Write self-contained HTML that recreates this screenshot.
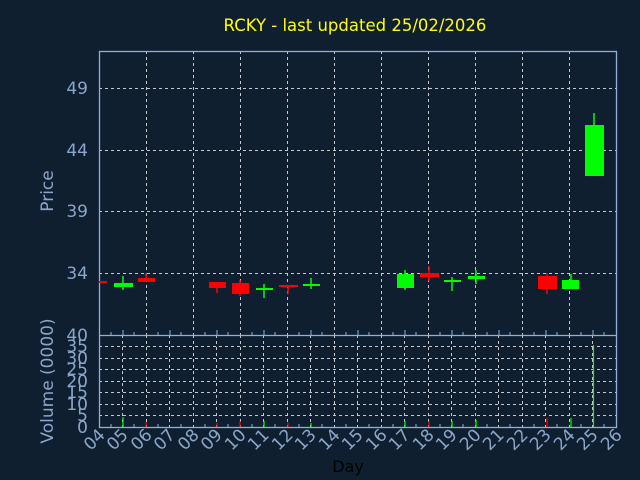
<!DOCTYPE html><html><head><style>body{margin:0;background:#0f1f30;}svg{display:block}</style></head><body>
<svg width="640" height="480" xmlns="http://www.w3.org/2000/svg" font-family="DejaVu Sans, Liberation Sans, sans-serif">
<rect width="640" height="480" fill="#0f1f30"/>
<text x="355" y="31" fill="#ffff00" font-size="16.5" text-anchor="middle">RCKY - last updated 25/02/2026</text>
<g stroke="#c8c8c8" stroke-dasharray="3,3" stroke-width="1">
<line x1="99" x2="617" y1="88.5" y2="88.5"/><line x1="99" x2="617" y1="150.5" y2="150.5"/><line x1="99" x2="617" y1="211.5" y2="211.5"/><line x1="99" x2="617" y1="273.5" y2="273.5"/>
<line x1="146.5" x2="146.5" y1="51" y2="335"/><line x1="193.5" x2="193.5" y1="51" y2="335"/><line x1="240.5" x2="240.5" y1="51" y2="335"/><line x1="287.5" x2="287.5" y1="51" y2="335"/><line x1="334.5" x2="334.5" y1="51" y2="335"/><line x1="381.5" x2="381.5" y1="51" y2="335"/><line x1="428.5" x2="428.5" y1="51" y2="335"/><line x1="475.5" x2="475.5" y1="51" y2="335"/><line x1="522.5" x2="522.5" y1="51" y2="335"/><line x1="569.5" x2="569.5" y1="51" y2="335"/>
<line x1="99" x2="617" y1="346.5" y2="346.5"/><line x1="99" x2="617" y1="358.5" y2="358.5"/><line x1="99" x2="617" y1="369.5" y2="369.5"/><line x1="99" x2="617" y1="381.5" y2="381.5"/><line x1="99" x2="617" y1="392.5" y2="392.5"/><line x1="99" x2="617" y1="404.5" y2="404.5"/><line x1="99" x2="617" y1="415.5" y2="415.5"/>
<line x1="122.5" x2="122.5" y1="335" y2="427"/><line x1="146.5" x2="146.5" y1="335" y2="427"/><line x1="169.5" x2="169.5" y1="335" y2="427"/><line x1="193.5" x2="193.5" y1="335" y2="427"/><line x1="216.5" x2="216.5" y1="335" y2="427"/><line x1="240.5" x2="240.5" y1="335" y2="427"/><line x1="263.5" x2="263.5" y1="335" y2="427"/><line x1="287.5" x2="287.5" y1="335" y2="427"/><line x1="310.5" x2="310.5" y1="335" y2="427"/><line x1="334.5" x2="334.5" y1="335" y2="427"/><line x1="357.5" x2="357.5" y1="335" y2="427"/><line x1="381.5" x2="381.5" y1="335" y2="427"/><line x1="404.5" x2="404.5" y1="335" y2="427"/><line x1="428.5" x2="428.5" y1="335" y2="427"/><line x1="451.5" x2="451.5" y1="335" y2="427"/><line x1="475.5" x2="475.5" y1="335" y2="427"/><line x1="498.5" x2="498.5" y1="335" y2="427"/><line x1="522.5" x2="522.5" y1="335" y2="427"/><line x1="545.5" x2="545.5" y1="335" y2="427"/><line x1="569.5" x2="569.5" y1="335" y2="427"/><line x1="592.5" x2="592.5" y1="335" y2="427"/>
</g>
<g fill="none" stroke="#8fb0d8" stroke-width="1.3">
<rect x="99.5" y="51.5" width="517" height="376"/><line x1="99" x2="617" y1="335.5" y2="335.5"/>
</g>
<g stroke="#8fb0d8" stroke-width="1">
<path d="M111 427v-3M134 427v-3M158 427v-3M181 427v-3M205 427v-3M228 427v-3M252 427v-3M275 427v-3M299 427v-3M322 427v-3M346 427v-3M369 427v-3M393 427v-3M416 427v-3M440 427v-3M463 427v-3M487 427v-3M510 427v-3M534 427v-3M557 427v-3M581 427v-3M604 427v-3"/>
<path d="M111 335v-3M134 335v-3M158 335v-3M181 335v-3M205 335v-3M228 335v-3M252 335v-3M275 335v-3M299 335v-3M322 335v-3M346 335v-3M369 335v-3M393 335v-3M416 335v-3M440 335v-3M463 335v-3M487 335v-3M510 335v-3M534 335v-3M557 335v-3M581 335v-3M604 335v-3"/>
<path d="M123 335v-5M170 335v-5M217 335v-5M264 335v-5M311 335v-5M358 335v-5M405 335v-5M452 335v-5M499 335v-5M546 335v-5M593 335v-5"/>
</g>
<!-- candles -->
<g stroke-width="1.5">
<line x1="99" x2="107" y1="282" y2="282" stroke="#f00" stroke-width="2"/>
<line x1="123" x2="123" y1="276" y2="290" stroke="#0f0"/><rect x="114" y="283" width="19" height="4" fill="#0f0"/>
<line x1="146" x2="146" y1="273" y2="282" stroke="#f00"/><rect x="138" y="278" width="17" height="4" fill="#f00"/>
<line x1="217" x2="217" y1="282" y2="293" stroke="#f00"/><rect x="209" y="282" width="17" height="6" fill="#f00"/>
<line x1="240" x2="240" y1="280" y2="296" stroke="#f00"/><rect x="232" y="283" width="17" height="11" fill="#f00"/>
<line x1="264" x2="264" y1="284" y2="298" stroke="#0f0"/><rect x="256" y="288" width="17" height="2" fill="#0f0"/>
<line x1="288" x2="288" y1="285" y2="294" stroke="#f00"/><rect x="279" y="285" width="19" height="2" fill="#f00"/>
<line x1="311" x2="311" y1="278" y2="289" stroke="#0f0"/><rect x="303" y="284" width="17" height="2" fill="#0f0"/>
<line x1="405" x2="405" y1="270" y2="290" stroke="#0f0"/><rect x="397" y="274" width="17" height="14" fill="#0f0"/>
<line x1="429" x2="429" y1="266" y2="281" stroke="#f00"/><rect x="420" y="273" width="19" height="4" fill="#f00"/>
<line x1="452" x2="452" y1="277" y2="291" stroke="#0f0"/><rect x="444" y="280" width="17" height="2" fill="#0f0"/>
<line x1="476" x2="476" y1="270" y2="284" stroke="#0f0"/><rect x="468" y="276" width="17" height="3" fill="#0f0"/>
<line x1="547" x2="547" y1="273" y2="294" stroke="#f00"/><rect x="538" y="276" width="19" height="13" fill="#f00"/>
<line x1="571" x2="571" y1="274" y2="289" stroke="#0f0"/><rect x="562" y="280" width="17" height="9" fill="#0f0"/>
<line x1="594" x2="594" y1="113" y2="125" stroke="#0f0"/><rect x="585" y="125" width="19" height="51" fill="#0f0"/>
</g>
<!-- volume bars -->
<g stroke-width="1.2">
<line x1="123" x2="123" y1="417" y2="427" stroke="#0f0"/><line x1="146" x2="146" y1="422" y2="427" stroke="#f00"/><line x1="217" x2="217" y1="423" y2="427" stroke="#f00"/><line x1="240" x2="240" y1="421" y2="427" stroke="#f00"/><line x1="264" x2="264" y1="421" y2="427" stroke="#0f0"/><line x1="288" x2="288" y1="423" y2="427" stroke="#f00"/><line x1="311" x2="311" y1="423" y2="427" stroke="#0f0"/><line x1="405" x2="405" y1="421" y2="427" stroke="#0f0"/><line x1="429" x2="429" y1="421" y2="427" stroke="#f00"/><line x1="452" x2="452" y1="421" y2="427" stroke="#0f0"/><line x1="476" x2="476" y1="420" y2="427" stroke="#0f0"/><line x1="547" x2="547" y1="418" y2="427" stroke="#f00"/><line x1="571" x2="571" y1="418" y2="427" stroke="#0f0"/><line x1="593.5" x2="593.5" y1="345" y2="427" stroke="#0f0"/>
</g>
<g fill="#8aa6c8" font-size="17" text-anchor="end">
<text x="88" y="94">49</text><text x="88" y="156">44</text><text x="88" y="217">39</text><text x="88" y="279">34</text><text x="88" y="341">40</text>
<text x="88" y="352">35</text><text x="88" y="364">30</text><text x="88" y="375">25</text><text x="88" y="387">20</text><text x="88" y="398">15</text><text x="88" y="410">10</text><text x="88" y="421">5</text><text x="88" y="433">0</text>
<text transform="translate(53,191) rotate(-90)" text-anchor="middle">Price</text>
<text transform="translate(53,381) rotate(-90)" text-anchor="middle">Volume (0000)</text>
</g>
<g fill="#8aa6c8" font-size="17" text-anchor="end">
<text transform="translate(106,436) rotate(-45)">04</text><text transform="translate(129,436) rotate(-45)">05</text><text transform="translate(153,436) rotate(-45)">06</text><text transform="translate(176,436) rotate(-45)">07</text><text transform="translate(200,436) rotate(-45)">08</text><text transform="translate(223,436) rotate(-45)">09</text><text transform="translate(247,436) rotate(-45)">10</text><text transform="translate(270,436) rotate(-45)">11</text><text transform="translate(294,436) rotate(-45)">12</text><text transform="translate(317,436) rotate(-45)">13</text><text transform="translate(341,436) rotate(-45)">14</text><text transform="translate(364,436) rotate(-45)">15</text><text transform="translate(388,436) rotate(-45)">16</text><text transform="translate(411,436) rotate(-45)">17</text><text transform="translate(435,436) rotate(-45)">18</text><text transform="translate(458,436) rotate(-45)">19</text><text transform="translate(482,436) rotate(-45)">20</text><text transform="translate(505,436) rotate(-45)">21</text><text transform="translate(529,436) rotate(-45)">22</text><text transform="translate(552,436) rotate(-45)">23</text><text transform="translate(576,436) rotate(-45)">24</text><text transform="translate(599,436) rotate(-45)">25</text><text transform="translate(623,436) rotate(-45)">26</text>
</g>
<text x="348" y="472" fill="#000" font-size="16" text-anchor="middle">Day</text>
</svg>
</body></html>
